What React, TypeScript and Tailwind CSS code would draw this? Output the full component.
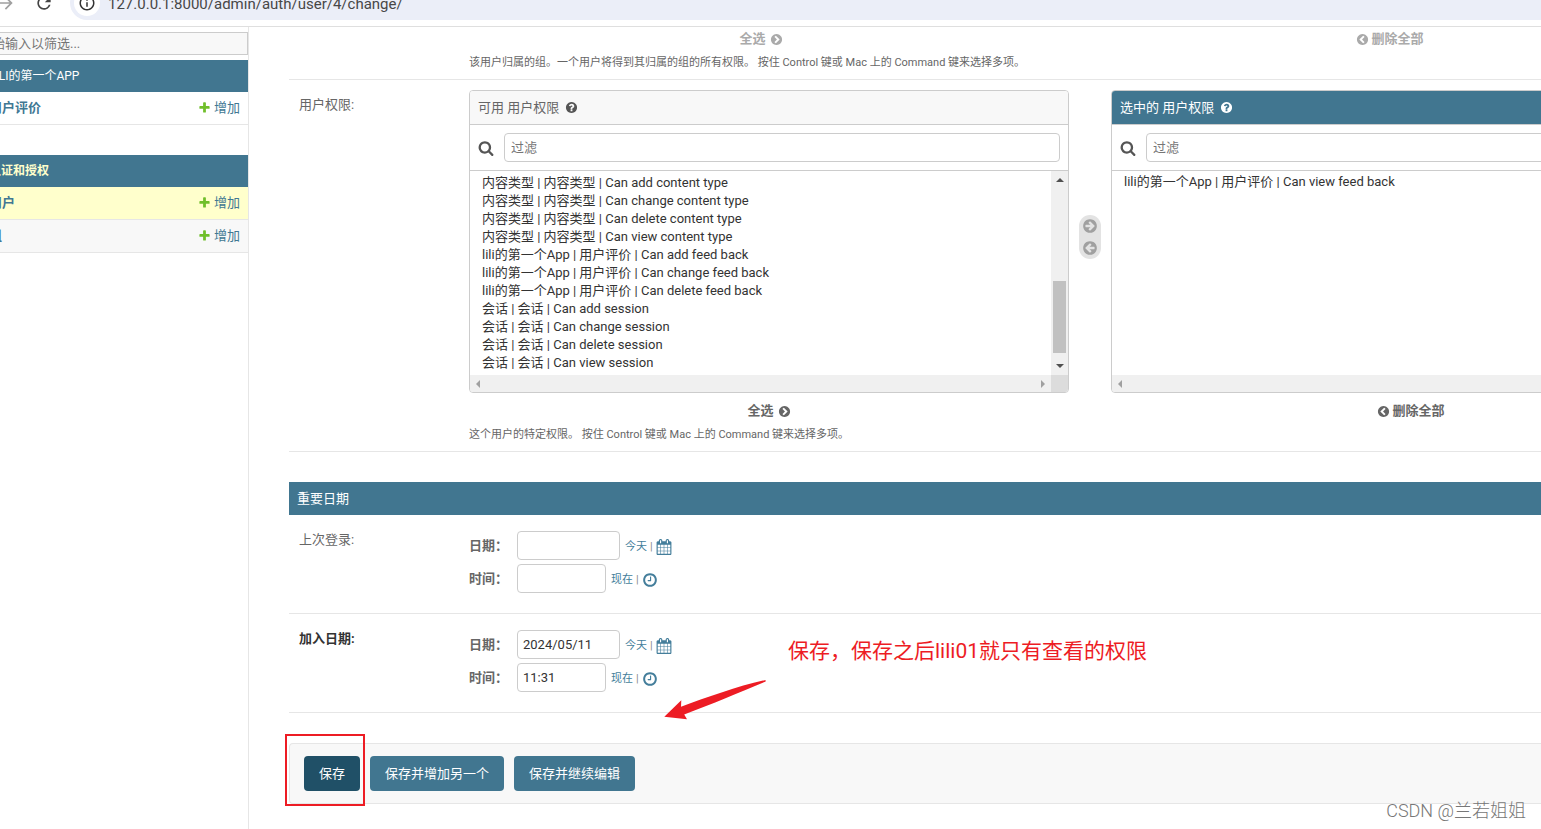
import { useLayoutEffect, useRef } from 'react';
import { MdArrowForward, MdInfoOutline, MdRefresh } from 'react-icons/md';

const CIRCLE =
  'q0 209-103 385.5t-279.5 279.5-385.5 103-385.5-103-279.5-279.5-103-385.5 103-385.5 279.5-279.5 385.5-103 385.5 103 279.5 279.5 103 385.5z';

const ICONS = {
  plus: 'M1600 796v192q0 40-28 68t-68 28h-416v416q0 40-28 68t-68 28h-192q-40 0-68-28t-28-68v-416h-416q-40 0-68-28t-28-68v-192q0-40 28-68t68-28h416v-416q0-40 28-68t68-28h192q40 0 68 28t28 68v416h416q40 0 68 28t28 68z',
  calendar:
    'M192 1664h288v-288h-288v288zm352 0h320v-288h-320v288zm-352-352h288v-320h-288v320zm352 0h320v-320h-320v320zm-352-384h288v-288h-288v288zm736 736h320v-288h-320v288zm-384-736h320v-288h-320v288zm768 736h288v-288h-288v288zm-384-352h320v-320h-320v320zm-352-864v-288q0-13-9.5-22.5t-22.5-9.5h-64q-13 0-22.5 9.5t-9.5 22.5v288q0 13 9.5 22.5t22.5 9.5h64q13 0 22.5-9.5t9.5-22.5zm736 864h288v-320h-288v320zm-384-384h320v-288h-320v288zm384 0h288v-288h-288v288zm32-480v-288q0-13-9.5-22.5t-22.5-9.5h-64q-13 0-22.5 9.5t-9.5 22.5v288q0 13 9.5 22.5t22.5 9.5h64q13 0 22.5-9.5t9.5-22.5zm384-64v1280q0 52-38 90t-90 38h-1408q-52 0-90-38t-38-90v-1280q0-52 38-90t90-38h128v-96q0-66 47-113t113-47h64q66 0 113 47t47 113v96h384v-96q0-66 47-113t113-47h64q66 0 113 47t47 113v96h128q52 0 90 38t38 90z',
  clock:
    'M1024 544v448q0 14-9 23t-23 9h-320q-14 0-23-9t-9-23v-64q0-14 9-23t23-9h224v-352q0-14 9-23t23-9h64q14 0 23 9t9 23zm416 352q0-148-73-273t-198-198-273-73-273 73-198 198-73 273 73 273 198 198 273 73 273-73 198-198 73-273zm224 0' +
    CIRCLE,
  search:
    'M1216 832q0-185-131.5-316.5t-316.5-131.5-316.5 131.5-131.5 316.5 131.5 316.5 316.5 131.5 316.5-131.5 131.5-316.5zm512 832q0 52-38 90t-90 38q-54 0-90-38l-343-342q-179 124-399 124-143 0-273.5-55.5t-225-150-150-225-55.5-273.5 55.5-273.5 150-225 225-150 273.5-55.5 273.5 55.5 225 150 150 225 55.5 273.5q0 220-124 399l343 343q37 37 37 90z',
  help:
    'M1024 1376v-192q0-14-9-23t-23-9h-192q-14 0-23 9t-9 23v192q0 14 9 23t23 9h192q14 0 23-9t9-23zm256-672q0-88-55.5-163t-138.5-116-170-41q-243 0-371 213-15 24 8 42l132 100q7 6 19 6 16 0 25-12 53-68 86-92 34-24 86-24 48 0 85.5 26t37.5 59q0 38-20 61t-68 45q-63 28-115.5 86.5t-52.5 125.5v36q0 14 9 23t23 9h192q14 0 23-9t9-23q0-19 21.5-49.5t54.5-49.5q32-18 49-28.5t46-35 44.5-48 28-60.5 12.5-81zm384 192' +
    CIRCLE,
  arrow:
    'M1413 896q0-27-18-45l-91-91-362-362q-18-18-45-18t-45 18l-91 91q-18 18-18 45t18 45l189 189h-502q-26 0-45 19t-19 45v128q0 26 19 45t45 19h502l-189 189q-18 18-18 45t18 45l91 91q18 18 45 18t45-18l362-362 91-91q18-18 18-45zm251 0' +
    CIRCLE,
  chevron:
    'M845 1395l454-454q19-19 19-45t-19-45l-454-454q-19-19-45-19t-45 19l-102 102q-19 19-19 45t19 45l307 307-307 307q-19 19-19 45t19 45l102 102q19 19 45 19t45-19zm819-499' +
    CIRCLE,
};

function Icon({ name, className }: { name: keyof typeof ICONS; className: string }) {
  return (
    <svg viewBox="0 0 1792 1792" fill="currentColor" aria-hidden="true" className={`shrink-0 ${className}`}>
      <path d={ICONS[name]} />
    </svg>
  );
}

function BrowserBar() {
  return (
    <header className="h-[27px] shrink-0 overflow-hidden border-b border-[#dfdfdf]">
      <div className="-mt-3.5 flex h-[34px] items-center">
        <MdArrowForward className="-ml-1 size-5 shrink-0 text-[#a0a0a0]" />
        <MdRefresh className="ml-[18px] size-5 shrink-0 text-[#444]" />
        <div className="ml-4 flex h-full flex-1 items-center rounded-l-full bg-[#ebeef8] pl-1">
          <span className="flex size-[26px] items-center justify-center rounded-full bg-white">
            <MdInfoOutline className="size-[18px] text-[#333]" />
          </span>
          <span className="ml-2 pt-0.5 text-[15px] text-[#474747]">127.0.0.1:8000/admin/auth/user/4/change/</span>
        </div>
      </div>
    </header>
  );
}

function NavRow({ label, className }: { label: string; className: string }) {
  return (
    <tr className={className}>
      <th scope="row" className="h-[33px] border-b border-[#e6e6e6] pl-[19px] text-left">
        <a href="#model">{label}</a>
      </th>
      <td className="h-[33px] border-b border-[#e6e6e6] pr-2">
        <a href="#add" className="flex items-center justify-end gap-[3px] font-normal">
          <Icon name="plus" className="mb-0.5 size-[13px] text-[#70bf2b]" />
          增加
        </a>
      </td>
    </tr>
  );
}

function Sidebar() {
  return (
    <nav className="w-[249px] shrink-0 overflow-hidden border-r border-[#e6e6e6] pt-[5px]">
      <div className="-ml-[30px] text-[#417893]">
        <input
          aria-label="筛选导航项"
          placeholder="开始输入以筛选..."
          className="block h-[23px] w-full border border-[#ccc] bg-[#f8f8f8] px-2 placeholder:text-[#757575]"
        />
        <table className="mt-[5px] w-full border-separate border-spacing-0">
          <caption className="h-8 bg-[#417690] pl-[19px] text-left text-xs leading-8 text-white">
            <a href="#app">LILI的第一个APP</a>
          </caption>
          <tbody>
            <NavRow label="用户评价" className="font-bold" />
          </tbody>
        </table>
        <table className="mt-[30px] w-full border-separate border-spacing-0">
          <caption className="h-8 bg-[#417690] pl-[19px] text-left text-xs leading-8 font-bold text-[#ffffcc]">
            <a href="#auth">认证和授权</a>
          </caption>
          <tbody>
            <NavRow label="用户" className="bg-[#ffffcc] font-medium" />
            <NavRow label="组" className="bg-[#f8f8f8] font-medium" />
          </tbody>
        </table>
      </div>
    </nav>
  );
}

const AVAILABLE = [
  '认证和授权 | 用户 | Can view user',
  '内容类型 | 内容类型 | Can add content type',
  '内容类型 | 内容类型 | Can change content type',
  '内容类型 | 内容类型 | Can delete content type',
  '内容类型 | 内容类型 | Can view content type',
  'lili的第一个App | 用户评价 | Can add feed back',
  'lili的第一个App | 用户评价 | Can change feed back',
  'lili的第一个App | 用户评价 | Can delete feed back',
  '会话 | 会话 | Can add session',
  '会话 | 会话 | Can change session',
  '会话 | 会话 | Can delete session',
  '会话 | 会话 | Can view session',
];

const CHOSEN = ['lili的第一个App | 用户评价 | Can view feed back'];

function Triangle({ className }: { className: string }) {
  return (
    <svg viewBox="0 0 8 8" fill="currentColor" aria-hidden="true" className={`size-2 ${className}`}>
      <path d="M0 6 4 2l4 4z" />
    </svg>
  );
}

interface PanelProps {
  title: string;
  options: string[];
  chosen?: boolean;
}

function Panel({ title, options, chosen = false }: PanelProps) {
  const list = useRef<HTMLSelectElement>(null);
  useLayoutEffect(() => {
    if (list.current && !chosen) list.current.scrollTop = 17;
  }, [chosen]);

  return (
    <div className="w-[600px] shrink-0 overflow-hidden rounded border border-[#ccc]">
      <h2
        className={`flex h-[34px] items-center gap-1.5 border-b border-[#ccc] px-2 ${
          chosen ? 'bg-[#417690] text-white' : 'bg-[#f8f8f8] text-[#666]'
        }`}
      >
        {title}
        <Icon name="help" className={chosen ? 'size-[13px] text-white' : 'size-[13px] text-[#555]'} />
      </h2>
      <div className="flex h-[46px] items-center gap-2.5 border-b border-[#ccc] px-2">
        <Icon name="search" className="size-4 text-[#555]" />
        <input
          aria-label={`${title} 过滤`}
          placeholder="过滤"
          className="h-[29px] min-w-0 flex-1 rounded border border-[#ccc] px-1.5 placeholder:text-[#757575]"
        />
      </div>
      <div className="flex h-[204px]">
        <select
          ref={list}
          multiple
          aria-label={title}
          className="h-full min-w-0 flex-1 overflow-y-scroll pt-0 pr-0 pb-1.5 pl-2.5 text-[#333] [scrollbar-width:none]"
        >
          {options.map((o) => (
            <option key={o} className="h-[18px] min-h-[18px] px-0.5 py-0 leading-[18px]">
              {o}
            </option>
          ))}
        </select>
        {!chosen && (
          <div className="flex w-[17px] flex-col items-center bg-[#f0f0f0] py-[5px] text-[#505050]">
            <Triangle className="" />
            <div className="mt-[97px] h-[72px] w-[13px] bg-[#c1c1c1]" />
            <Triangle className="mt-auto rotate-180" />
          </div>
        )}
      </div>
      <div className="flex h-[17px] bg-[#f0f0f0] text-[#a0a0a0]">
        <div className="flex flex-1 items-center justify-between px-1">
          <Triangle className="-rotate-90" />
          <Triangle className="rotate-90" />
        </div>
        {!chosen && <div className="w-[17px] bg-[#dcdcdc]" />}
      </div>
    </div>
  );
}

function ChooseAll() {
  return (
    <button type="button" className="flex h-6 items-center gap-1 font-bold">
      全选
      <Icon name="chevron" className="size-[13px]" />
    </button>
  );
}

function ClearAll() {
  return (
    <button type="button" className="flex h-6 items-center gap-0.5 font-bold">
      <Icon name="chevron" className="size-[13px] -scale-x-100" />
      删除全部
    </button>
  );
}

interface DateRowProps {
  id: string;
  label: string;
  required?: boolean;
  date: string;
  time: string;
}

function DateRow({ id, label, required = false, date, time }: DateRowProps) {
  return (
    <div className="flex border-b border-[#e6e6e6] pb-5">
      <span
        className={`mt-2.5 w-[180px] shrink-0 pl-2.5 leading-[30px] ${
          required ? 'font-bold text-[#333]' : 'text-[#666]'
        }`}
      >
        {label}
      </span>
      <div className="flex flex-col gap-1 pt-4">
        <div className="flex items-center">
          <label htmlFor={`${id}-date`} className="w-12 font-bold text-[#666]">
            日期：
          </label>
          <input
            id={`${id}-date`}
            defaultValue={date}
            className="h-[29px] w-[103px] rounded border border-[#ccc] px-[5px] text-[#333]"
          />
          <span className="ml-[5px] flex items-center gap-[3px] pt-[3px] text-[11px] text-[#447e9b]">
            <a href="#today">今天</a>
            <span className="text-[#888]">|</span>
            <a href="#calendar" aria-label="选择日期">
              <Icon name="calendar" className="size-4" />
            </a>
          </span>
        </div>
        <div className="flex items-center">
          <label htmlFor={`${id}-time`} className="w-12 font-bold text-[#666]">
            时间：
          </label>
          <input
            id={`${id}-time`}
            defaultValue={time}
            className="h-[29px] w-[89px] rounded border border-[#ccc] px-[5px] text-[#333]"
          />
          <span className="ml-[5px] flex items-center gap-[3px] pt-[3px] text-[11px] text-[#447e9b]">
            <a href="#now">现在</a>
            <span className="text-[#888]">|</span>
            <a href="#clock" aria-label="选择时间">
              <Icon name="clock" className="size-4" />
            </a>
          </span>
        </div>
      </div>
    </div>
  );
}

function ChangeForm() {
  return (
    <form className="min-w-0 flex-1 overflow-hidden pl-10" onSubmit={(e) => e.preventDefault()}>
      <div className="border-b border-[#e6e6e6] pb-1 pl-[180px]">
        <div className="flex text-[#aaa]">
          <div className="flex w-[584px] shrink-0 justify-center">
            <ChooseAll />
          </div>
          <div className="ml-[45px] flex w-[584px] shrink-0 justify-center">
            <ClearAll />
          </div>
        </div>
        <p className="text-[11px] leading-6 text-[#666]">
          该用户归属的组。一个用户将得到其归属的组的所有权限。 按住 Control 键或 Mac 上的 Command 键来选择多项。
        </p>
      </div>

      <div className="flex border-b border-[#e6e6e6] pt-2.5 pb-1">
        <span className="w-[180px] shrink-0 pl-2.5 leading-[30px] text-[#666]">用户权限:</span>
        <div>
          <div className="flex text-[#666]">
            <div className="flex flex-col items-center gap-1.5">
              <Panel title="可用 用户权限" options={AVAILABLE} />
              <ChooseAll />
            </div>
            <div className="mx-2.5 mt-[125px] flex h-11 w-[22px] shrink-0 flex-col items-center justify-between rounded-full bg-[#e3e3e3] py-[3px] text-[#a0a0a0]">
              <button type="button" aria-label="选择">
                <Icon name="arrow" className="block size-4" />
              </button>
              <button type="button" aria-label="删除">
                <Icon name="arrow" className="block size-4 -scale-x-100" />
              </button>
            </div>
            <div className="flex flex-col items-center gap-1.5">
              <Panel title="选中的 用户权限" options={CHOSEN} chosen />
              <ClearAll />
            </div>
          </div>
          <p className="text-[11px] leading-6 text-[#666]">
            这个用户的特定权限。 按住 Control 键或 Mac 上的 Command 键来选择多项。
          </p>
        </div>
      </div>

      <h2 className="mt-[30px] bg-[#417690] px-2 leading-[33px] text-white">重要日期</h2>
      <DateRow id="last-login" label="上次登录:" date="" time="" />
      <DateRow id="joined" label="加入日期:" required date="2024/05/11" time="11:31" />

      <div className="mt-[30px] flex gap-2.5 rounded-l border border-r-0 border-[#e6e6e6] bg-[#f8f8f8] px-3.5 py-3 text-white">
        <div className="relative">
          <button type="submit" className="h-[35px] rounded bg-[#205067] px-[15px]">
            保存
          </button>
          <div className="pointer-events-none absolute -top-[22px] -left-[19px] h-[72px] w-20 border-2 border-[#ed1c24]" />
          <svg
            viewBox="0 0 106 44"
            aria-hidden="true"
            className="pointer-events-none absolute -top-20 left-[356px] h-[44px] w-[106px] fill-[#ed1c24]"
          >
            <path d="M4.3 40.7 21.3 24.3 21 30.7C48 21 78 10 105.5 4L105.7 5.5C82 15.5 52 28 24.2 38.5L27 43.3z" />
          </svg>
          <p className="pointer-events-none absolute -top-30 left-[484px] text-[21px] leading-[30px] whitespace-nowrap text-[#ed1c24]">
            保存，保存之后lili01就只有查看的权限
          </p>
        </div>
        <button type="submit" className="h-[35px] rounded bg-[#417690] px-[15px]">
          保存并增加另一个
        </button>
        <button type="submit" className="h-[35px] rounded bg-[#417690] px-[15px]">
          保存并继续编辑
        </button>
      </div>
    </form>
  );
}

export default function App() {
  return (
    <div className="relative flex min-h-screen flex-col overflow-hidden bg-white font-['Roboto','Noto_Sans_CJK_SC',sans-serif] text-[13px] leading-[18px]">
      <BrowserBar />
      <div className="flex flex-1">
        <Sidebar />
        <ChangeForm />
      </div>
      <p className="pointer-events-none absolute right-[15px] bottom-1.5 text-lg leading-6 font-light text-[#777]">
        CSDN @兰若姐姐
      </p>
    </div>
  );
}
